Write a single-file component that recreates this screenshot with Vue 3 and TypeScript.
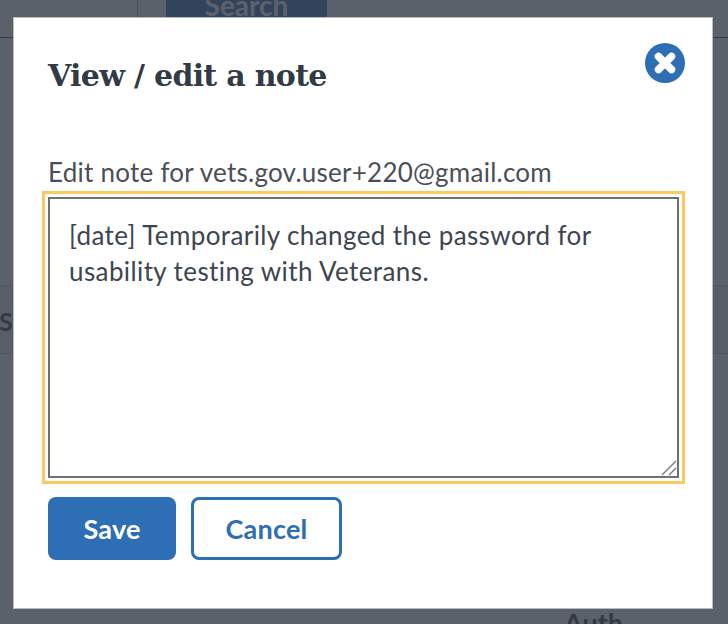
<script setup lang="ts">
const note = '[date] Temporarily changed the password for usability testing with Veterans.'
</script>

<template>
  <div class="page">
    <div class="top">
      <div class="top-left"></div>
      <div class="top-search"><span class="search-btn">Search</span></div>
    </div>
    <div class="band"><span class="band-text">Status</span></div>
    <div class="auth">Auth</div>

    <div class="overlay">
      <div class="modal">
        <div class="head">
          <h2 class="title">View / edit a note</h2>
          <button class="close" type="button" aria-label="Close">
            <svg viewBox="0 0 40 40" width="40" height="40">
              <circle cx="20" cy="20" r="20" fill="#2e6eb5" />
              <path d="M13.5 13.5 L26.5 26.5 M26.5 13.5 L13.5 26.5" stroke="#fff" stroke-width="7.5" stroke-linecap="round" />
            </svg>
          </button>
        </div>
        <label class="label" for="note">Edit note for vets.gov.user+220@gmail.com</label>
        <div class="area-wrap">
          <textarea id="note" class="area" :value="note"></textarea>
          <svg class="grip" viewBox="0 0 16 16" width="16" height="16">
            <path d="M1 15 L15 1 M8 15 L15 8" stroke="#777" stroke-width="1.4" fill="none" />
          </svg>
        </div>
        <div class="actions">
          <button class="btn primary" type="button">Save</button>
          <button class="btn secondary" type="button">Cancel</button>
        </div>
      </div>
    </div>
  </div>
</template>

<style scoped>
.page {
  position: relative;
  width: 728px;
  height: 624px;
  overflow: hidden;
  background: #fff;
  font-family: Lato, "Noto Sans", sans-serif;
  color: #323a45;
}
.top {
  display: flex;
  height: 37px;
  border-bottom: 1px solid #323a45;
}
.top-left {
  width: 137px;
  border-right: 1px solid #9aa0a8;
}
.top-search {
  padding-left: 28px;
}
.search-btn {
  display: block;
  width: 161px;
  height: 37px;
  background: #2e6eb5;
  color: #fff;
  font-weight: 700;
  font-size: 28px;
  line-height: 10px;
  text-align: center;
}
.band {
  margin-top: 247px;
  height: 67px;
  border-top: 1px solid #c9ccd0;
  border-bottom: 1px solid #c9ccd0;
  background: #f1f1f1;
  font-weight: 700;
  font-size: 25px;
  line-height: 70px;
}
.band-text {
  display: block;
  margin-left: -1px;
}
.auth {
  margin: 256px 0 0 564px;
  font-weight: 700;
  font-size: 27px;
  line-height: 26px;
}
.overlay {
  position: absolute;
  inset: 0;
  background: rgba(50, 58, 69, 0.8);
  padding: 17px 15px 15px 13px;
}
.modal {
  box-sizing: border-box;
  height: 592px;
  background: #fff;
  padding: 27px 35px 0;
  outline: 1px solid #b8bbc0;
  outline-offset: -1px;
}
.head {
  display: flex;
  justify-content: space-between;
  align-items: flex-start;
  height: 116px;
}
.title {
  margin: 10px 0 0;
  font-family: "DejaVu Serif", "Liberation Serif", serif;
  font-size: 30px;
  line-height: 44px;
  font-weight: 700;
  letter-spacing: -0.7px;
  color: #323a45;
}
.close {
  width: 40px;
  height: 40px;
  margin: -1px -7px 0 0;
  padding: 0;
  border: 0;
  background: none;
  display: block;
}
.close svg {
  display: block;
}
.label {
  display: block;
  height: 37px;
  font-size: 26px;
  line-height: 24px;
  letter-spacing: 0.25px;
  color: #4a4f57;
}
.area-wrap {
  position: relative;
  width: 631px;
  height: 281px;
}
.area {
  display: block;
  box-sizing: border-box;
  width: 100%;
  height: 100%;
  margin: 0;
  padding: 18px 50px 20px 19px;
  border: 2px solid #6b7079;
  outline: 3px solid #fbc95c;
  outline-offset: 3px;
  border-radius: 0;
  background: #fff;
  font-family: Lato, "Noto Sans", sans-serif;
  font-size: 26px;
  letter-spacing: 0.4px;
  line-height: 36px;
  color: #3d4551;
  resize: none;
}
.grip {
  position: absolute;
  right: 2px;
  bottom: 2px;
}
.actions {
  display: flex;
  gap: 15px;
  margin-top: 19px;
}
.btn {
  box-sizing: border-box;
  height: 63px;
  border-radius: 8px;
  font-family: Lato, "Noto Sans", sans-serif;
  font-size: 27px;
  letter-spacing: 0.2px;
  font-weight: 700;
}
.primary {
  width: 128px;
  border: 0;
  background: #2e6eb5;
  color: #fff;
}
.secondary {
  width: 151px;
  border: 3px solid #2e6eb5;
  background: #fff;
  color: #2e6eb5;
}
</style>
